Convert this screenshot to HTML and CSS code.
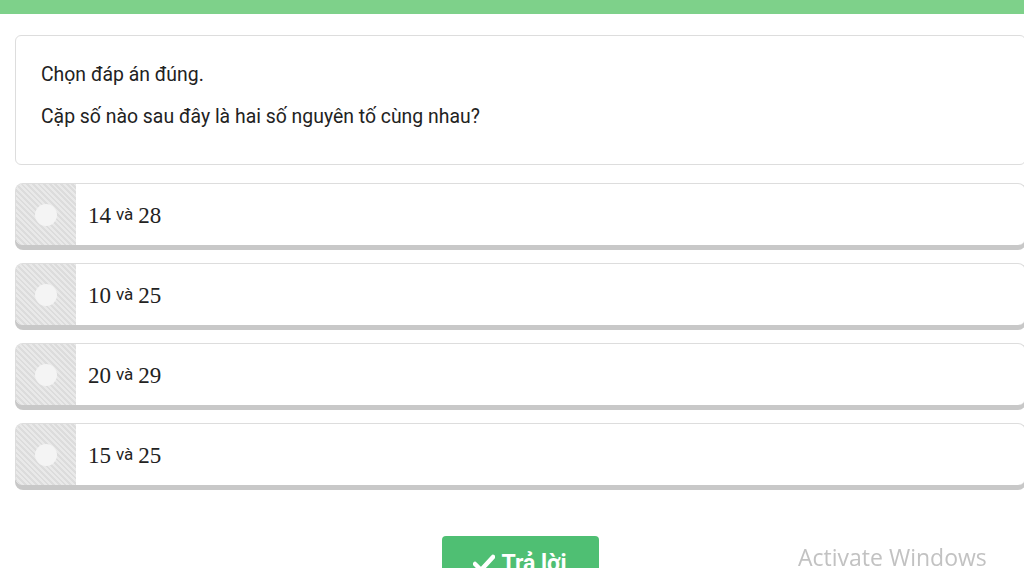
FILE: index.html
```html
<!DOCTYPE html>
<html>
<head>
    <title>Trắc nghiệm</title>
    <link rel="stylesheet" href="styles.css">
</head>
<body>
    <div class="top-bar"></div>
    <div class="quiz">
        <div class="question">
            <p>Chọn đáp án đúng.</p>
            <p>Cặp số nào sau đây là hai số nguyên tố cùng nhau?</p>
        </div>

        <!-- answer options -->
        <div class="option">
            <div class="option-check"><span class="dot"></span></div>
            <div class="option-text"><span class="num">14</span> <span class="word">và</span> <span class="num">28</span></div>
        </div>
        <div class="option">
            <div class="option-check"><span class="dot"></span></div>
            <div class="option-text"><span class="num">10</span> <span class="word">và</span> <span class="num">25</span></div>
        </div>
        <div class="option">
            <div class="option-check"><span class="dot"></span></div>
            <div class="option-text"><span class="num">20</span> <span class="word">và</span> <span class="num">29</span></div>
        </div>
        <div class="option">
            <div class="option-check"><span class="dot"></span></div>
            <div class="option-text"><span class="num">15</span> <span class="word">và</span> <span class="num">25</span></div>
        </div>

        <div class="actions">
            <button class="answer-button">
                <svg width="22" height="18" viewBox="0 0 22 18"><path d="M2 10 L8 16 L20 3" fill="none" stroke="white" stroke-width="4.5" stroke-linecap="round" stroke-linejoin="round"/></svg>
                Trả lời
            </button>
        </div>
    </div>
    <div class="watermark">Activate Windows</div>
</body>
</html>
```

FILE: styles.css
```css
body {
    margin: 0;
    font-family: Roboto, "Noto Sans", Arial, sans-serif;
    background-color: white;
    color: #222;
    overflow: hidden;
}

.top-bar {
    height: 14px;
    background-color: #7ed18a;
}

.quiz {
    padding: 21px 0 0 15px;
    margin-right: -2px;
}

.question {
    border: 1px solid #ddd;
    border-radius: 6px;
    padding: 27px 25px 35px 25px;
    margin-bottom: 18px;
}

.question p {
    margin: 0;
    font-size: 19.4px;
    line-height: 24px;
}

.question p + p {
    margin-top: 18px;
}

.option {
    display: flex;
    height: 61px;
    border: 1px solid #ddd;
    border-bottom: none;
    border-radius: 8px;
    box-shadow: 0 5px 0 #c8c8c8;
    margin-bottom: 18px;
    overflow: hidden;
}

.option-check {
    width: 60px;
    display: flex;
    align-items: center;
    justify-content: center;
    background-color: #e3e3e3;
    background-image: repeating-linear-gradient(45deg, #e9e9e9 0, #e9e9e9 2px, #dcdcdc 2px, #dcdcdc 4px);
    box-shadow: 0 5px 0 #9c9c9c;
}

.dot {
    width: 22px;
    height: 22px;
    border-radius: 50%;
    background-color: #f4f4f4;
}

.option-text {
    padding-left: 12px;
    display: flex;
    align-items: center;
    gap: 5px;
    padding-top: 2px;
}

.num {
    font-family: "Liberation Serif", "DejaVu Serif", serif;
    font-size: 23px;
    color: #222;
}

.word {
    font-size: 17px;
    position: relative;
    top: -2px;
}

.actions {
    display: flex;
    justify-content: center;
    padding-top: 33px;
    padding-right: 1px;
}

.answer-button {
    display: flex;
    align-items: center;
    gap: 6px;
    width: 157px;
    height: 44px;
    justify-content: center;
    padding: 10px 0 0 0;
    border: none;
    border-radius: 4px;
    background-color: #4fbf73;
    color: white;
    font-family: Roboto, "Noto Sans", sans-serif;
    font-weight: bold;
    font-size: 23px;
}

.watermark {
    position: fixed;
    left: 798px;
    top: 541px;
    font-family: "Open Sans", "Noto Sans", sans-serif;
    font-size: 23px;
    color: #c2c2c2;
}
```
